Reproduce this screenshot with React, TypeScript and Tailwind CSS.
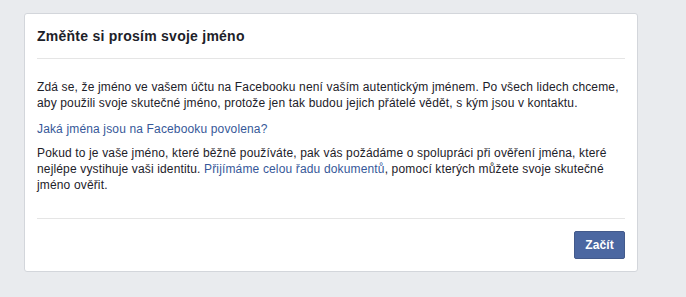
import React from "react";

export default function App() {
  return (
    <div
      className="w-[686px] h-[297px] bg-[#e9ebee] pt-[13px] pl-[24px]"
      style={{ fontFamily: '"Liberation Sans", Arial, sans-serif' }}
    >
      <div className="w-[614px] bg-white border border-[#d3d6db] rounded-[3px] text-[12px] leading-[16px] text-[#1d2129] tracking-[0.15px]">
        <div className="mx-[12px] border-b border-[#e5e5e5] pt-[13px] pb-[13px]">
          <h2 className="text-[14px] leading-[18px] font-bold text-[#1d2129] tracking-[0.25px]">
            Změňte si prosím svoje jméno
          </h2>
        </div>
        <div className="mx-[12px] border-b border-[#e5e5e5] pt-[20px] pb-[25px]">
          <p>
            Zdá se, že jméno ve vašem účtu na Facebooku není vaším autentickým jménem. Po všech lidech chceme,
            aby použili svoje skutečné jméno, protože jen tak budou jejich přátelé vědět, s kým jsou v kontaktu.
          </p>
          <p className="mt-[10px]">
            <a className="text-[#365899]">Jaká jména jsou na Facebooku povolena?</a>
          </p>
          <p className="mt-[8px]">
            Pokud to je vaše jméno, které běžně používáte, pak vás požádáme o spolupráci při ověření jména, které
            nejlépe vystihuje vaši identitu. <a className="text-[#365899]">Přijímáme celou řadu dokumentů</a>, pomocí
            kterých můžete svoje skutečné jméno ověřit.
          </p>
        </div>
        <div className="mx-[12px] flex justify-end pt-[12px] pb-[12px]">
          <button className="h-[28px] px-[10px] bg-[#4b67a1] border border-[#435a8b] rounded-[2px] text-white font-bold text-[12px]">
            Začít
          </button>
        </div>
      </div>
    </div>
  );
}
